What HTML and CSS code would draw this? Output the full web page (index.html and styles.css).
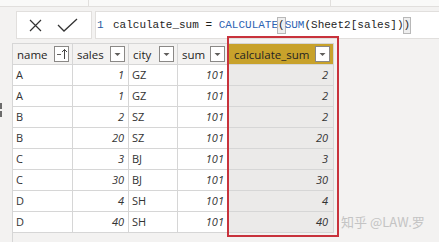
FILE: index.html
```html
<!DOCTYPE html>
<html>
<head>
<meta charset="utf-8">
<link rel="stylesheet" href="styles.css">
</head>
<body>
<div class="topbar"><div class="seg seg1"></div><div class="seg seg2"></div></div>
<div class="formula-row">
  <div class="fx-buttons">
    <svg class="ic-x" width="13" height="13" viewBox="0 0 13 13"><path d="M1 1 L12 12 M12 1 L1 12" stroke="#333" stroke-width="1.2" fill="none"/></svg>
    <svg class="ic-check" width="21" height="14" viewBox="0 0 21 14"><path d="M1 7 L7 13 L20 1" stroke="#333" stroke-width="1.3" fill="none"/></svg>
  </div>
  <div class="formula-input"><span class="ln">1</span><span class="code">calculate_sum = <span class="kw">CALCULATE</span><span class="br">(</span><span class="kw">SUM</span>(Sheet2[sales])<span class="br">)</span></span></div>
</div>
<div class="workspace">
  <div class="gutter"><span class="tick"></span><span class="tick"></span></div>
  <div class="grid-area">
    <div class="grid">
      <div class="hd"><span>name</span><span class="dd"><svg width="13" height="14" viewBox="0 0 13 14"><path d="M2 7.5 L6 7.5" stroke="#605e5c" stroke-width="1"/><path d="M9.5 12 L9.5 2.5 M7 5 L9.5 2.5 L12 5" stroke="#444" stroke-width="1" fill="none"/></svg></span></div>
      <div class="hd"><span>sales</span><span class="dd"><svg width="13" height="14" viewBox="0 0 13 14"><path d="M3.5 6 L9.5 6 L6.5 9 Z" fill="#605e5c"/></svg></span></div>
      <div class="hd"><span>city</span><span class="dd"><svg width="13" height="14" viewBox="0 0 13 14"><path d="M3.5 6 L9.5 6 L6.5 9 Z" fill="#605e5c"/></svg></span></div>
      <div class="hd"><span>sum</span><span class="dd"><svg width="13" height="14" viewBox="0 0 13 14"><path d="M3.5 6 L9.5 6 L6.5 9 Z" fill="#605e5c"/></svg></span></div>
      <div class="hd hd-sel"><span>calculate_sum</span><span class="dd"><svg width="13" height="14" viewBox="0 0 13 14"><path d="M3.5 6 L9.5 6 L6.5 9 Z" fill="#605e5c"/></svg></span></div>

      <div class="c">A</div><div class="c num">1</div><div class="c">GZ</div><div class="c num">101</div><div class="c num sel">2</div>
      <div class="c">A</div><div class="c num">1</div><div class="c">GZ</div><div class="c num">101</div><div class="c num sel">2</div>
      <div class="c">B</div><div class="c num">2</div><div class="c">SZ</div><div class="c num">101</div><div class="c num sel">2</div>
      <div class="c">B</div><div class="c num">20</div><div class="c">SZ</div><div class="c num">101</div><div class="c num sel">20</div>
      <div class="c">C</div><div class="c num">3</div><div class="c">BJ</div><div class="c num">101</div><div class="c num sel">3</div>
      <div class="c">C</div><div class="c num">30</div><div class="c">BJ</div><div class="c num">101</div><div class="c num sel">30</div>
      <div class="c">D</div><div class="c num">4</div><div class="c">SH</div><div class="c num">101</div><div class="c num sel">4</div>
      <div class="c">D</div><div class="c num">40</div><div class="c">SH</div><div class="c num">101</div><div class="c num sel">40</div>
    </div>
  </div>
</div>
<div class="highlight"></div>
<div class="watermark">知乎 @LAW.罗</div>
</body>
</html>
```
FILE: styles.css
```css
* { box-sizing: border-box; }
html, body { margin: 0; padding: 0; }
body {
  width: 439px;
  height: 242px;
  overflow: hidden;
  background: #f3f2f1;
  font-family: "Open Sans", "Noto Sans", sans-serif;
  font-size: 11px;
  color: #252423;
  position: relative;
  display: flex;
  flex-direction: column;
}
.topbar {
  height: 7px;
  background: #f9f9f8;
  border-bottom: 1px solid #e1dfdd;
  display: flex;
  flex-shrink: 0;
}
.seg { height: 6px; border-right: 1px solid #e1dfdd; }
.seg1 { width: 89px; }
.seg2 { width: 242px; }
.formula-row {
  display: flex;
  margin-top: 4px;
  padding-left: 16px;
  gap: 3px;
  height: 28px;
  flex-shrink: 0;
}
.fx-buttons {
  width: 76px;
  height: 28px;
  background: #fff;
  border: 1px solid #e1dfdd;
  display: flex;
  align-items: center;
  padding-left: 12px;
  gap: 15px;
}
.ic-x { margin-top: 1px; }
.ic-check { margin-top: -1px; }
.formula-input {
  flex: 1;
  height: 28px;
  background: #fff;
  border: 1px solid #e1dfdd;
  border-right: none;
  display: flex;
  align-items: center;
  padding-left: 1px;
  font-family: "Liberation Mono", "DejaVu Sans Mono", monospace;
  font-size: 11px;
  color: #1e1e1e;
  white-space: pre;
}
.ln { width: 16px; color: #2a5a9e; }
.kw { color: #2e64b3; }
.br {
  display: inline-block;
  line-height: 15px;
  background: #eeeeee;
  outline: 1px solid #b8b8b8;
}
.workspace {
  display: flex;
  flex: 1;
  margin-top: 4px;
}
.gutter {
  width: 12px;
  display: flex;
  flex-direction: column;
  padding-top: 60px;
  gap: 2px;
}
.tick { width: 2px; height: 6px; background: #6b6b6b; }
.grid-area {
  flex: 1;
  border-left: 1px solid #d6d6d6;
}
.grid {
  display: grid;
  grid-template-columns: 60px 56px 49px 51px 105px;
  grid-auto-rows: 21px;
  width: 321px;
  border-top: 1px solid #d6d6d6;
}
.hd {
  display: flex;
  align-items: center;
  justify-content: space-between;
  padding: 0 3px 0 4px;
  border-right: 1px solid #d6d6d6;
  border-bottom: 1px solid #d6d6d6;
  background: #f3f2f1;
  font-size: 11.5px;
  color: #252423;
}
.hd-sel {
  background: #c8a22b;
  padding-left: 5px;
  border-right-color: #d6d6d6;
}
.dd {
  width: 15px;
  height: 16px;
  background: #fff;
  border: 1px solid #8a8886;
  display: flex;
  align-items: center;
  justify-content: center;
}
.dd svg { display: block; }
.c {
  background: #fff;
  border-right: 1px solid #d6d6d6;
  border-bottom: 1px solid #d6d6d6;
  padding: 0 4px 0 3px;
  line-height: 20px;
  color: #333;
}
.num { text-align: right; font-style: italic; padding-right: 4px; }
.sel { background: #ebeae9; padding-right: 5px; }
.highlight {
  position: absolute;
  left: 227px;
  top: 36px;
  width: 112px;
  height: 201px;
  border: 2px solid #c8323c;
}
.watermark {
  position: absolute;
  left: 341px;
  top: 212px;
  font-family: "Noto Sans CJK SC", "Noto Sans", sans-serif;
  font-size: 13px;
  color: #c4c4c4;
  white-space: nowrap;
}
```
